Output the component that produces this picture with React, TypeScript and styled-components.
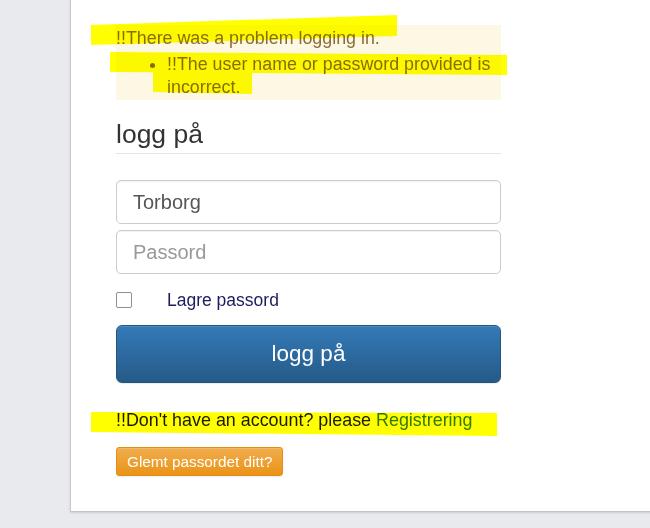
import styled, { createGlobalStyle } from "styled-components";

const GlobalStyle = createGlobalStyle`
  html, body {
    margin: 0;
    padding: 0;
    background: #e9eaee;
    font-family: "Liberation Sans", Arial, sans-serif;
  }
`;

type Mark = { x: number; y: number; w: number; h: number; clip: string };

// highlighter strokes drawn over the screenshot
const marks: Mark[] = [
  { x: 91, y: 15, w: 306, h: 30, clip: "0 10px, 306px 0, 306px 21px, 0 30px" },
  { x: 110, y: 52, w: 397, h: 23, clip: "0 0, 397px 3px, 397px 23px, 0 20px" },
  { x: 153, y: 70, w: 99, h: 24, clip: "0 0, 99px 0, 99px 24px, 0 22px" },
  { x: 91, y: 411, w: 406, h: 25, clip: "0 1px, 406px 2px, 406px 25px, 0 21px" },
];

export default function App() {
  return (
    <Page>
      <GlobalStyle />
      <Card>
        <Content>
          <ErrorBox>
            <ErrorTitle>!!There was a problem logging in.</ErrorTitle>
            <ErrorList>
              <li>!!The user name or password provided is incorrect.</li>
            </ErrorList>
          </ErrorBox>

          <Heading>logg på</Heading>

          <Form>
            <Field type="text" defaultValue="Torborg" />
            <Field type="password" placeholder="Passord" $gap />
            <CheckRow>
              <Check type="checkbox" />
              <CheckLabel>Lagre passord</CheckLabel>
            </CheckRow>
            <PrimaryButton type="button">logg på</PrimaryButton>
          </Form>

          <Register>
            !!Don't have an account? please <Link href="#">Registrering</Link>
          </Register>
          <WarnButton type="button">Glemt passordet ditt?</WarnButton>
        </Content>
      </Card>
      {marks.map((m, i) => (
        <Highlight key={i} $x={m.x} $y={m.y} $w={m.w} $h={m.h} $clip={m.clip} />
      ))}
    </Page>
  );
}

const Page = styled.div`
  position: relative;
  width: 650px;
  height: 528px;
  overflow: hidden;
`;

const Card = styled.div`
  margin-left: 70px;
  width: 640px;
  height: 511px;
  background: #fff;
  border-left: 1px solid #c9cacd;
  border-bottom: 1px solid #c3c4c7;
  box-shadow: 0 1px 2px rgba(0, 0, 0, 0.12);
`;

const Content = styled.div`
  width: 385px;
  padding: 25px 0 0 45px;
  color: #1b1b5f;
  font-size: 17.5px;
`;

const ErrorBox = styled.div`
  background: #fcf8e3;
  color: #8a6d3b;
  font-size: 17.85px;
  line-height: 23px;
  padding: 2px 0 1px;
`;

const ErrorTitle = styled.div``;

const ErrorList = styled.ul`
  margin: 3px 0 0;
  padding-left: 51px;
  list-style: disc;
`;

const Heading = styled.h3`
  margin: 20px 0 0;
  padding-bottom: 4px;
  border-bottom: 1px solid #e5e5e5;
  font-size: 26.5px;
  font-weight: normal;
  line-height: 29px;
  color: #333;
`;

const Form = styled.form`
  display: flex;
  flex-direction: column;
  margin-top: 26px;
`;

const Field = styled.input<{ $gap?: boolean }>`
  box-sizing: border-box;
  height: 44px;
  width: 100%;
  margin: ${(p) => (p.$gap ? "6px" : "0")} 0 0;
  padding: 0 16px;
  border: 1px solid #ccc;
  border-radius: 5px;
  font-family: inherit;
  font-size: 20px;
  color: #555;
  outline: none;
  box-shadow: inset 0 1px 1px rgba(0, 0, 0, 0.05);

  &::placeholder {
    color: #999;
  }
`;

const CheckRow = styled.label`
  display: flex;
  align-items: center;
  gap: 35px;
  height: 16px;
  margin-top: 18px;
`;

const Check = styled.input`
  appearance: none;
  box-sizing: border-box;
  width: 16px;
  height: 16px;
  margin: 0;
  border: 1px solid #8f8f8f;
  border-radius: 2px;
  background: #fff;
`;

const CheckLabel = styled.span`
  line-height: 16px;
`;

const PrimaryButton = styled.button`
  box-sizing: border-box;
  height: 58px;
  width: 100%;
  margin-top: 17px;
  border: 1px solid #245580;
  border-radius: 6px;
  background: linear-gradient(to bottom, #337ab7 0, #265a88 100%);
  box-shadow: inset 0 1px 0 rgba(255, 255, 255, 0.15), 0 1px 1px rgba(0, 0, 0, 0.075);
  color: #fff;
  font-family: inherit;
  font-size: 22.5px;
`;

const Register = styled.div`
  margin-top: 26px;
  font-size: 17.9px;
  line-height: 23px;
`;

const Link = styled.a`
  color: #337ab7;
  text-decoration: none;
`;

const WarnButton = styled.button`
  box-sizing: border-box;
  display: block;
  height: 29px;
  margin-top: 15px;
  padding: 0 10px;
  border: 1px solid #e38d13;
  border-radius: 3px;
  background: linear-gradient(to bottom, #f0ad4e 0, #eb9316 100%);
  box-shadow: inset 0 1px 0 rgba(255, 255, 255, 0.15), 0 1px 1px rgba(0, 0, 0, 0.075);
  color: #fff;
  font-family: inherit;
  font-size: 15.3px;
`;

const Highlight = styled.div<{ $x: number; $y: number; $w: number; $h: number; $clip: string }>`
  position: absolute;
  left: ${(p) => p.$x}px;
  top: ${(p) => p.$y}px;
  width: ${(p) => p.$w}px;
  height: ${(p) => p.$h}px;
  background: #ffff00;
  mix-blend-mode: multiply;
  clip-path: polygon(${(p) => p.$clip});
  pointer-events: none;
`;
